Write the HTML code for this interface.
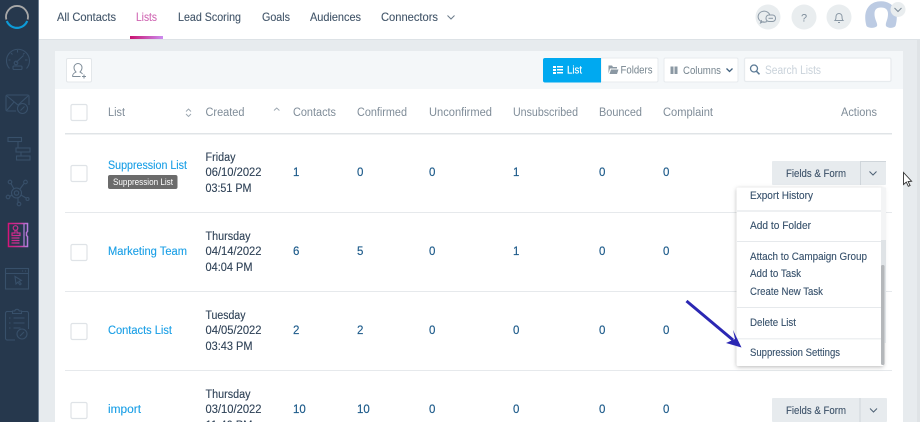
<!DOCTYPE html>
<html><head><meta charset="utf-8"><style>
html,body{margin:0;padding:0;background:#e7ebee;width:920px;height:422px;overflow:hidden}
svg{display:block}
text{font-family:"Liberation Sans",sans-serif;font-size:11.5px;fill:#3a4d62}
.nav{font-size:12px;fill:#43566a;stroke:#43566a;stroke-width:.12}
.h{font-size:11.5px;fill:#7f8c98}
.l{font-size:11.5px;fill:#1a9fe6;stroke:#1a9fe6;stroke-width:.12}
.n{font-size:11.5px;fill:#1c5a8a;stroke:#1c5a8a;stroke-width:.15}
.d{font-size:11.5px;fill:#2f4257;stroke:#2f4257;stroke-width:.12}
.m{font-size:11px;fill:#36506b;stroke:#36506b;stroke-width:.12}
.i{fill:none;stroke:#38506a;stroke-width:1.1}
.cb{fill:#fff;stroke:#dfe3e7;stroke-width:1.2}
</style></head><body>
<svg width="920" height="422" viewBox="0 0 920 422" xmlns="http://www.w3.org/2000/svg">
<defs>
<linearGradient id="g" x1="0" x2="1" y1="0" y2="0"><stop offset="0" stop-color="#c9126f"/><stop offset="1" stop-color="#cc8cf0"/></linearGradient>
<linearGradient id="g2" gradientUnits="userSpaceOnUse" x1="8" x2="28" y1="0" y2="0"><stop offset="0" stop-color="#d4157a"/><stop offset="0.6" stop-color="#c83a9c"/><stop offset="1" stop-color="#b57fe0"/></linearGradient>
<filter id="sh" x="-10%" y="-10%" width="120%" height="120%"><feDropShadow dx="0" dy="1" stdDeviation="2" flood-color="#000" flood-opacity=".28"/></filter>
</defs>

<rect width="920" height="422" fill="#e7ebee"/>
<rect x="0" y="0" width="920" height="39" fill="#fff"/>
<rect x="39" y="39" width="881" height="1" fill="#dde2e6"/>

<!-- sidebar -->
<rect x="0" y="0" width="38" height="422" fill="#26384d"/>
<rect x="38" y="0" width="1" height="422" fill="#6d7f92"/>
<path d="M6.300 19.500A11 11 0 1 1 27.700 19.500" fill="none" stroke="#a8a8a8" stroke-width="1.800"/>
<path d="M6.800 21A11 11 0 0 0 27.200 21" fill="none" stroke="#0d9bd8" stroke-width="2.200"/>
<!-- gauge -->
<g class="i">
<path d="M9.500 68.500A11.500 11.500 0 1 1 26.500 68.500"/>
<path d="M8.500 60h2M25 60h2.500M11 53l1.500 1.500M17.500 50v2.500M24.500 53L23 54.500"/>
<path d="M16 62.500L23.500 55.500"/>
<circle cx="16" cy="63" r="1.800"/>
<rect x="13" y="66" width="9" height="3.500" rx="1"/>
</g>
<!-- envelope -->
<g class="i">
<path d="M16 111H7.500a1.500 1.500 0 0 1-1.500-1.500V96.500A1.500 1.500 0 0 1 7.500 95h20a1.500 1.500 0 0 1 1.500 1.500V105"/>
<path d="M7 96l11 9 10-9M7 110l7-8"/>
<circle cx="22.500" cy="108.500" r="5"/>
<path d="M20.500 110.500l4-4"/>
</g>
<!-- gantt -->
<g class="i">
<rect x="8" y="137.500" width="13.500" height="4"/>
<rect x="16" y="148" width="14" height="4"/>
<rect x="16.500" y="156" width="13.500" height="4"/>
<path d="M18 141.500V148M21 152v4"/>
</g>
<!-- network -->
<g class="i">
<circle cx="16.500" cy="193" r="5"/><circle cx="16.500" cy="193" r="2.200"/>
<circle cx="10" cy="182" r="1.800"/><circle cx="25.500" cy="182" r="1.800"/>
<circle cx="8" cy="197" r="1.800"/><circle cx="19" cy="204" r="1.800"/><circle cx="27.500" cy="199" r="1.500"/>
<path d="M11 183.500l3 5.500M24 183.500l-4 5.500M9.800 196.500l2-1.500M18 198v4M21 195l5 3"/>
</g>
<!-- active -->
<g fill="none" stroke="url(#g2)" stroke-width="1.200">
<path d="M8.500 223.500h19v8l-1 1v3l1 1v10h-19z" stroke-width="1.500"/>
<path d="M24 224v22" stroke="#b57fe0"/>
<circle cx="15.500" cy="228" r="2.300"/>
<path d="M15 230.500v2.500h-3v2.500h8V233h-3v-2.500"/>
<path d="M11.500 238h8M11.500 240.500h8M11.500 243h8" stroke-width="1.300"/>
</g>
<!-- browser -->
<g class="i">
<rect x="5.500" y="268.500" width="23" height="20.500"/>
<path d="M5.500 273.500h23M22 271h1M25 271h1"/>
<path d="M15 276.500l1 7.500 1.800-1.800 2.200 2.700 1.200-1-2.200-2.500 2.400-1z"/>
</g>
<!-- clipboard -->
<g class="i">
<path d="M15 340H7.500A1.800 1.800 0 0 1 5.500 338V313.500A1.800 1.800 0 0 1 7.500 311.500H13M21 311.500H26.500A1.800 1.800 0 0 1 28.500 313.500V329"/>
<path d="M12.500 313.500v-2.500h2.200a2.400 2.400 0 0 1 4.600 0h2.200v2.500z"/>
<path d="M9 318h1.500M13.500 318h11M9 323h1.500M13.500 323h11M9 328h1.500M13.500 328h7"/>
<circle cx="22" cy="334" r="5"/>
<path d="M20 336l4-4"/>
</g>

<!-- nav -->
<text class="nav" x="57" y="21" textLength="59" lengthAdjust="spacingAndGlyphs">All Contacts</text>
<text class="nav" x="136" y="21" textLength="21" lengthAdjust="spacingAndGlyphs" style="fill:#d069b4;stroke:#d069b4">Lists</text>
<text class="nav" x="178" y="21" textLength="63" lengthAdjust="spacingAndGlyphs">Lead Scoring</text>
<text class="nav" x="262" y="21" textLength="28" lengthAdjust="spacingAndGlyphs">Goals</text>
<text class="nav" x="310" y="21" textLength="51" lengthAdjust="spacingAndGlyphs">Audiences</text>
<text class="nav" x="381" y="21" textLength="57" lengthAdjust="spacingAndGlyphs">Connectors</text>
<path d="M447.500 15.500l3.500 3.500 3.500-3.500" fill="none" stroke="#6b7b8a" stroke-width="1"/>
<rect x="130" y="36" width="33" height="3" fill="url(#g)"/>

<!-- top right -->
<circle cx="768" cy="17" r="12.500" fill="#e9edef"/>
<circle cx="804" cy="17" r="12.500" fill="#e9edef"/>
<circle cx="839" cy="17" r="12.500" fill="#e9edef"/>
<g fill="none" stroke="#8a98a5" stroke-width="1">
<path d="M767 21.500a6 5.500 0 1 1 3-6"/><path d="M761.500 20l-1 3 3-1.500"/>
<rect x="766" y="15" width="9.500" height="6.500" rx="3"/><path d="M768.500 18.300h4.500"/>
<path d="M835 20.500c1-1 1-2 1-4a3 3 0 0 1 6 0c0 2 0 3 1 4z"/><path d="M838 22.500h2"/>
</g>
<text x="804" y="21.500" text-anchor="middle" style="font-size:11px;fill:#7f8e9c">?</text>
<path d="M866.500 26C862 10 870 1.300 881 1.300S900 10 895.500 26C893.500 28.500 888 28.500 886 26C885 23 888 20 888 14C888 9.500 885.500 7.500 881 7.500S874.500 9.500 874.500 14C874.500 20 878 23 877 26C875 28.500 868.500 28.500 866.500 26Z" fill="#bccbe3"/>
<circle cx="898" cy="9.500" r="7.500" fill="#e9edef"/>
<path d="M894.500 8l3.500 3.500 3.500-3.500" fill="none" stroke="#7c8b99" stroke-width="1"/>

<!-- panel -->
<rect x="55" y="51" width="848" height="371" fill="#fff"/>
<rect x="55" y="51" width="848" height="38" fill="#f4f7f9"/>
<rect x="917" y="40" width="3" height="382" fill="#dfe3e6"/>

<rect x="66.500" y="58.500" width="25" height="23.500" rx="1.500" fill="#fff" stroke="#e3e7ea"/>
<g fill="none" stroke="#7f8d99" stroke-width="1">
<path d="M72.500 76.500c0-3 2-3.500 3.500-4.500-1-1-2-2.500-2-4.500a4 4 0 0 1 8 0c0 2-1 3.500-2 4.500 1 .6 2 1 2.500 2"/>
<path d="M72.500 76.500h8M82 76.500h4M84 74.500v4"/>
</g>

<!-- view toggles -->
<rect x="601" y="58" width="57" height="24" rx="1.500" fill="#fff" stroke="#e7ebee"/>
<path d="M545 58h56v24.500h-56a2 2 0 0 1-2-2V60a2 2 0 0 1 2-2z" fill="#00a9f0"/>
<g fill="#fff"><rect x="553" y="66" width="3" height="2"/><rect x="553" y="69" width="3" height="2"/><rect x="553" y="72" width="3" height="2"/><rect x="557" y="66" width="6" height="1.500"/><rect x="557" y="69" width="6" height="1.500"/><rect x="557" y="72" width="6" height="1.500"/></g>
<text x="567" y="73.500" textLength="15" lengthAdjust="spacingAndGlyphs" style="font-size:11px;fill:#fff;stroke:#fff;stroke-width:.15">List</text>
<path d="M608.500 65.500h3.500l1 1.500h4v1.500h-7l-1.500 5zM609.500 74l1.500-4.500h7.500l-1.500 4.500z" fill="#8b98a3"/>
<text x="620.500" y="73.500" textLength="32" lengthAdjust="spacingAndGlyphs" style="font-size:11px;fill:#76858f">Folders</text>

<rect x="664" y="58" width="74" height="24" rx="1.500" fill="#fff" stroke="#e7ebee"/>
<rect x="670.500" y="66.500" width="3" height="7.500" fill="#8b98a3"/><rect x="674.500" y="66.500" width="3" height="7.500" fill="#8b98a3"/>
<text x="683" y="74" textLength="38" lengthAdjust="spacingAndGlyphs" style="font-size:11px;fill:#76858f">Columns</text>
<path d="M726.500 68.500l3 3 3-3" fill="none" stroke="#40607e" stroke-width="1.300"/>

<rect x="744.500" y="58" width="146.500" height="23.500" rx="1.500" fill="#fff" stroke="#e7ebee" stroke-width="1.300"/>
<circle cx="754" cy="68.500" r="3.500" fill="none" stroke="#5b7a95" stroke-width="1.300"/>
<path d="M756.500 71.300l3 3" stroke="#5b7a95" stroke-width="1.500"/>
<text x="765" y="74" textLength="56" lengthAdjust="spacingAndGlyphs" style="font-size:11.5px;fill:#c9d2da">Search Lists</text>

<!-- table header -->
<rect class="cb" x="71" y="104.500" width="16" height="16" rx="1.500"/>
<text class="h" x="108" y="116" textLength="17" lengthAdjust="spacingAndGlyphs">List</text>
<path d="M186 111.500l2.500-2.500 2.500 2.500M186 114l2.500 2.500 2.500-2.500" fill="none" stroke="#9aa5af" stroke-width=".9"/>
<text class="h" x="205.500" y="116" textLength="39" lengthAdjust="spacingAndGlyphs">Created</text>
<path d="M274 110.500l2.700-2.500 2.700 2.500" fill="none" stroke="#9aa5af" stroke-width=".9"/>
<text class="h" x="293" y="116" textLength="43" lengthAdjust="spacingAndGlyphs">Contacts</text>
<text class="h" x="357" y="116" textLength="50" lengthAdjust="spacingAndGlyphs">Confirmed</text>
<text class="h" x="429" y="116" textLength="63" lengthAdjust="spacingAndGlyphs">Unconfirmed</text>
<text class="h" x="513" y="116" textLength="65" lengthAdjust="spacingAndGlyphs">Unsubscribed</text>
<text class="h" x="599" y="116" textLength="43" lengthAdjust="spacingAndGlyphs">Bounced</text>
<text class="h" x="663" y="116" textLength="50" lengthAdjust="spacingAndGlyphs">Complaint</text>
<text class="h" x="841" y="116" textLength="36" lengthAdjust="spacingAndGlyphs">Actions</text>
<rect x="65" y="133" width="827" height="1.500" fill="#e0e4e7"/>
<rect x="65" y="212" width="827" height="1" fill="#e6e9ec"/>
<rect x="65" y="291" width="827" height="1" fill="#e6e9ec"/>
<rect x="65" y="370" width="827" height="1" fill="#e6e9ec"/>

<!-- row 1 -->
<rect class="cb" x="71" y="165.500" width="16" height="16" rx="1.500"/>
<text class="l" x="108" y="169" textLength="79" lengthAdjust="spacingAndGlyphs">Suppression List</text>
<rect x="108" y="175" width="69.500" height="14" rx="2" fill="#6b6b6b"/>
<text x="113" y="185" textLength="60" lengthAdjust="spacingAndGlyphs" style="font-size:9px;fill:#fff">Suppression List</text>
<text class="d" x="205.500" y="161" textLength="30" lengthAdjust="spacingAndGlyphs">Friday</text>
<text class="d" x="205.500" y="176" textLength="56" lengthAdjust="spacingAndGlyphs">06/10/2022</text>
<text class="d" x="205.500" y="192" textLength="46" lengthAdjust="spacingAndGlyphs">03:51 PM</text>
<text class="n" x="293" y="176">1</text><text class="n" x="357" y="176">0</text><text class="n" x="429" y="176">0</text><text class="n" x="513" y="176">1</text><text class="n" x="599" y="176">0</text><text class="n" x="663" y="176">0</text>

<!-- row 2 -->
<rect class="cb" x="71" y="244.500" width="16" height="16" rx="1.500"/>
<text class="l" x="108" y="255" textLength="79" lengthAdjust="spacingAndGlyphs">Marketing Team</text>
<text class="d" x="205.500" y="240" textLength="45" lengthAdjust="spacingAndGlyphs">Thursday</text>
<text class="d" x="205.500" y="255" textLength="56" lengthAdjust="spacingAndGlyphs">04/14/2022</text>
<text class="d" x="205.500" y="271" textLength="47" lengthAdjust="spacingAndGlyphs">04:04 PM</text>
<text class="n" x="293" y="255">6</text><text class="n" x="357" y="255">5</text><text class="n" x="429" y="255">0</text><text class="n" x="513" y="255">1</text><text class="n" x="599" y="255">0</text><text class="n" x="663" y="255">0</text>

<!-- row 3 -->
<rect class="cb" x="71" y="323.500" width="16" height="16" rx="1.500"/>
<text class="l" x="108" y="334" textLength="64" lengthAdjust="spacingAndGlyphs">Contacts List</text>
<text class="d" x="205.500" y="319" textLength="40" lengthAdjust="spacingAndGlyphs">Tuesday</text>
<text class="d" x="205.500" y="334" textLength="56" lengthAdjust="spacingAndGlyphs">04/05/2022</text>
<text class="d" x="205.500" y="350" textLength="47" lengthAdjust="spacingAndGlyphs">03:43 PM</text>
<text class="n" x="293" y="334">2</text><text class="n" x="357" y="334">2</text><text class="n" x="429" y="334">0</text><text class="n" x="513" y="334">0</text><text class="n" x="599" y="334">0</text><text class="n" x="663" y="334">0</text>

<!-- row 4 -->
<rect class="cb" x="71" y="402.500" width="16" height="16" rx="1.500"/>
<text class="l" x="108" y="413" textLength="33" lengthAdjust="spacingAndGlyphs">import</text>
<text class="d" x="205.500" y="398" textLength="45" lengthAdjust="spacingAndGlyphs">Thursday</text>
<text class="d" x="205.500" y="413" textLength="56" lengthAdjust="spacingAndGlyphs">03/10/2022</text>
<text class="d" x="205.500" y="429" textLength="47" lengthAdjust="spacingAndGlyphs">11:46 PM</text>
<text class="n" x="293" y="413">10</text><text class="n" x="357" y="413">10</text><text class="n" x="429" y="413">0</text><text class="n" x="513" y="413">0</text><text class="n" x="599" y="413">0</text><text class="n" x="663" y="413">0</text>

<!-- buttons -->
<rect x="772" y="161" width="114" height="24" rx="1" fill="#e7ebee"/>
<rect x="860" y="161" width="1" height="24" fill="#cfd5da"/>
<rect x="860" y="161" width="26" height="1" fill="#cfd5da"/>
<text x="786" y="177" textLength="60" lengthAdjust="spacingAndGlyphs" style="font-size:11px;fill:#3d5269;stroke:#3d5269;stroke-width:.12">Fields &amp; Form</text>
<path d="M869.500 171.500l3.500 3.500 3.500-3.500" fill="none" stroke="#4e6175" stroke-width="1"/>

<rect x="772" y="398" width="115" height="24" rx="1" fill="#e7ebee"/>
<rect x="859.500" y="398" width="1" height="24" fill="#cfd5da"/>
<text x="786" y="414" textLength="60" lengthAdjust="spacingAndGlyphs" style="font-size:11px;fill:#3d5269;stroke:#3d5269;stroke-width:.12">Fields &amp; Form</text>
<path d="M870 408.500l3.500 3.500 3.500-3.500" fill="none" stroke="#4e6175" stroke-width="1"/>

<!-- dropdown -->
<rect x="736.500" y="187.500" width="147" height="178.500" rx="2" fill="#fff" filter="url(#sh)"/>
<rect x="881" y="187.500" width="5" height="53" fill="#f3f4f5"/>
<rect x="881" y="240" width="5" height="103" fill="#dfe3e6"/>
<rect x="881" y="265" width="3.500" height="100" rx="1.500" fill="#b4b7ba"/>
<text class="m" x="750" y="199" textLength="63" lengthAdjust="spacingAndGlyphs">Export History</text>
<rect x="737" y="210" width="144" height="2" fill="#eef0f2"/>
<text class="m" x="750" y="229" textLength="61" lengthAdjust="spacingAndGlyphs">Add to Folder</text>
<rect x="737" y="241" width="144" height="1" fill="#e6e9ec"/>
<text class="m" x="750" y="260" textLength="117" lengthAdjust="spacingAndGlyphs">Attach to Campaign Group</text>
<text class="m" x="750" y="277" textLength="51" lengthAdjust="spacingAndGlyphs">Add to Task</text>
<text class="m" x="750" y="295" textLength="73" lengthAdjust="spacingAndGlyphs">Create New Task</text>
<rect x="737" y="307" width="144" height="1" fill="#e6e9ec"/>
<text class="m" x="750" y="326" textLength="46" lengthAdjust="spacingAndGlyphs">Delete List</text>
<rect x="737" y="338" width="144" height="1.500" fill="#eef0f2"/>
<text class="m" x="750" y="356" textLength="90" lengthAdjust="spacingAndGlyphs">Suppression Settings</text>

<!-- arrow -->
<path d="M686.500 301L733 340" stroke="#2b27b3" stroke-width="3" fill="none"/>
<path d="M741.500 347.500L726 343 735 339 733 330z" fill="#2b27b3"/>

<!-- cursor -->
<path d="M903.500 172.500v12l2.800-2.400 2 4.200 1.800-.8-2-4 3.500-.3z" fill="#fff" stroke="#333" stroke-width=".9"/>
</svg>
</body></html>
